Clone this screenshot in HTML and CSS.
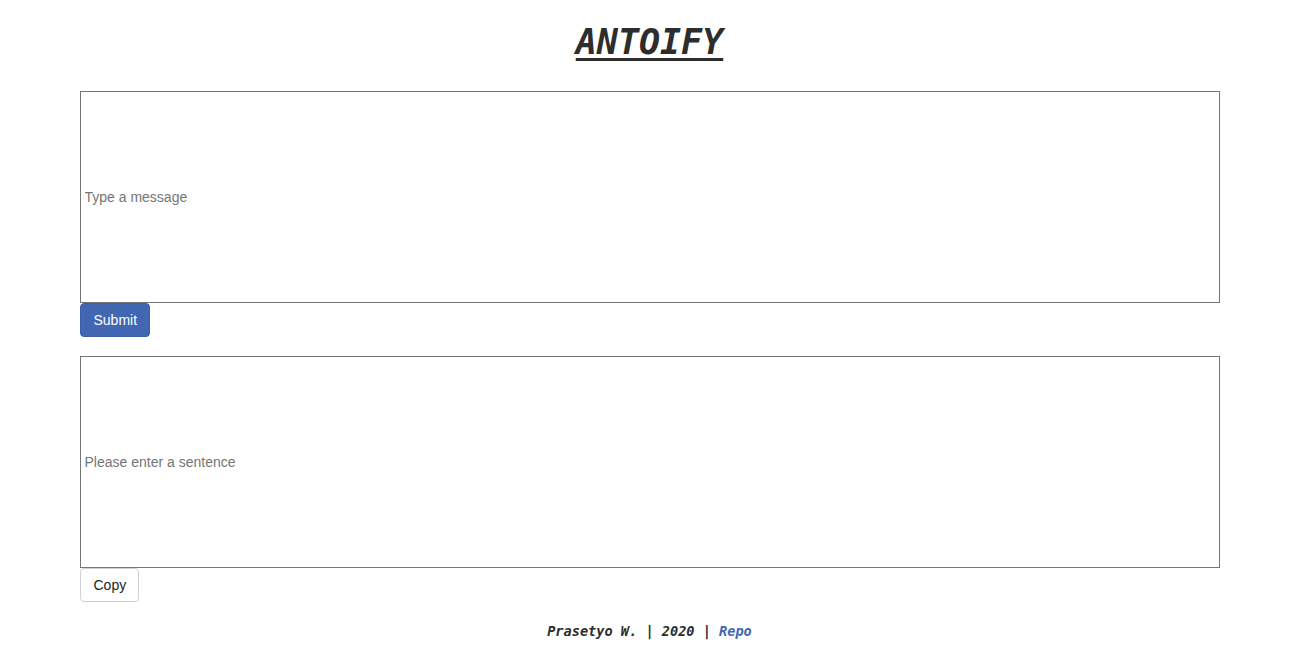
FILE: index.html
```html
<!DOCTYPE html>
<html>
<head>
<meta charset="utf-8">
<title>Antoify</title>
<link rel="stylesheet" href="styles.css">
</head>
<body>
<div class="container">
  <h1 class="title"><a href="#" class="title-link">ANTOIFY</a></h1>
  <form class="block">
    <input class="field" type="text" placeholder="Type a message">
    <div class="actions"><button type="button" class="btn btn-primary">Submit</button></div>
  </form>
  <div class="block block-second">
    <input class="field" type="text" placeholder="Please enter a sentence">
    <div class="actions"><button type="button" class="btn btn-light">Copy</button></div>
  </div>
  <footer class="footer">Prasetyo W. | 2020 | <a href="#" class="footer-link">Repo</a></footer>
</div>
</body>
</html>
```
FILE: styles.css
```css
html, body {
  margin: 0;
  padding: 0;
  background: #ffffff;
}
body {
  font-family: "Liberation Sans", Arial, sans-serif;
  color: #212529;
}
.container {
  width: 1140px;
  margin: 0 auto;
  display: flex;
  flex-direction: column;
}
.title {
  margin: 21px 0 28px;
  text-align: center;
  font-family: "DejaVu Sans Mono", monospace;
  font-style: italic;
  font-weight: bold;
  font-size: 35px;
  line-height: 42px;
}
.title-link {
  color: #2d2d2d;
  text-decoration: underline;
  text-decoration-thickness: 3px;
  text-underline-offset: 4px;
}
.block {
  display: flex;
  flex-direction: column;
  margin: 0;
}
.block-second {
  margin-top: 19px;
}
.field {
  box-sizing: border-box;
  width: 100%;
  height: 212px;
  margin: 0;
  padding: 1px 3px 1px 4px;
  border: 1px solid #767676;
  border-radius: 0;
  font-family: "Liberation Sans", Arial, sans-serif;
  font-size: 14px;
  color: #212529;
  outline: none;
}
.field::placeholder {
  color: #757575;
}
.actions {
  display: flex;
}
.btn {
  box-sizing: border-box;
  height: 34px;
  padding: 6px 12px 6px 13px;
  font-family: "Liberation Sans", Arial, sans-serif;
  font-size: 14px;
  line-height: 20px;
  border-radius: 4px;
  cursor: pointer;
}
.btn-primary {
  background: #4267b2;
  border: 1px solid #3b5ea6;
  color: #ffffff;
}
.btn-light {
  background: #ffffff;
  border: 1px solid #d0d0d0;
  color: #212529;
}
.footer {
  margin-top: 20px;
  text-align: center;
  font-family: "DejaVu Sans Mono", monospace;
  font-style: italic;
  font-weight: bold;
  font-size: 13.6px;
  line-height: 18px;
  color: #2d2d2d;
}
.footer-link {
  color: #4267b2;
  text-decoration: none;
}
```
